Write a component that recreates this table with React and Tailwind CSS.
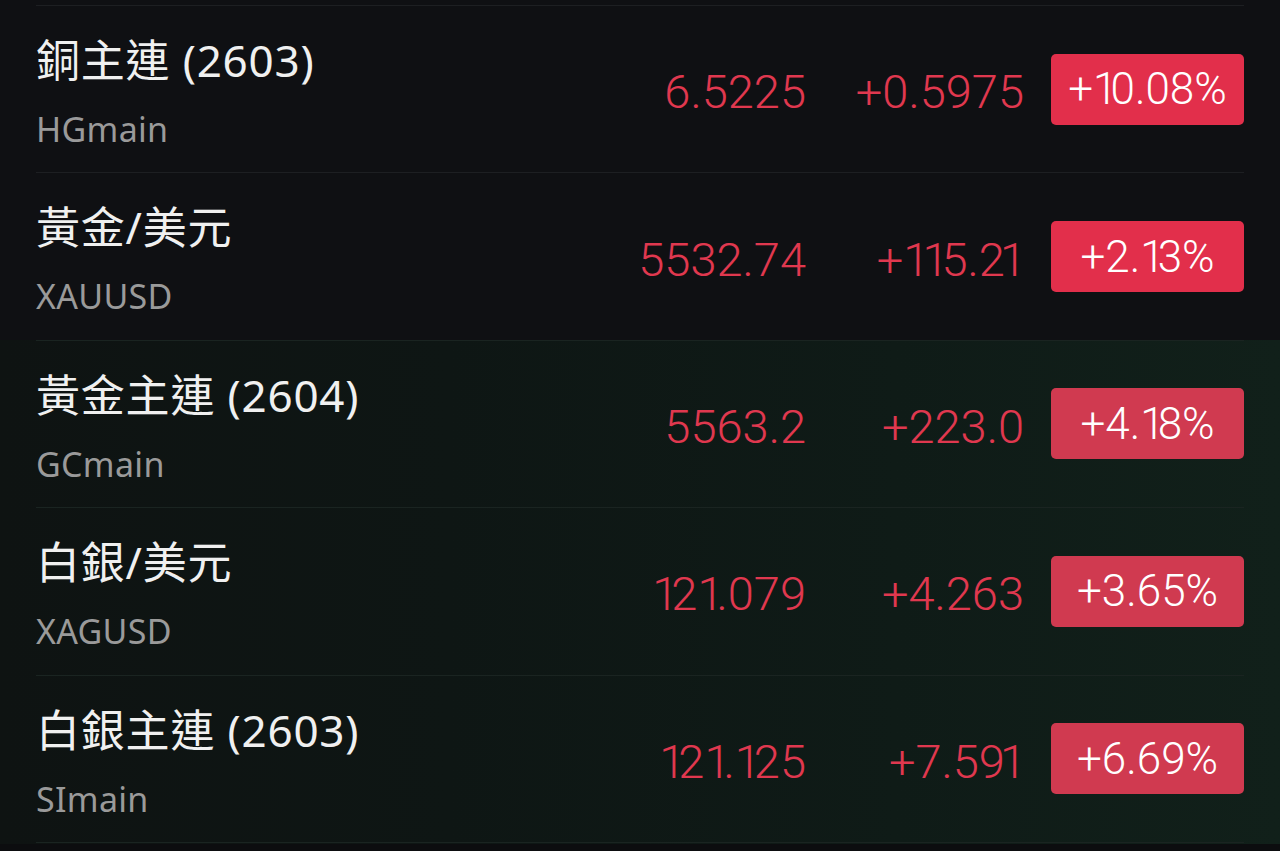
import React from 'react';

const rows = [
  { name: '銅主連 (2603)', code: 'HGmain', price: '6.5225', change: '+0.5975', pct: '+10.08%' },
  { name: '黃金/美元', code: 'XAUUSD', price: '5532.74', change: '+115.21', pct: '+2.13%' },
  { name: '黃金主連 (2604)', code: 'GCmain', price: '5563.2', change: '+223.0', pct: '+4.18%', tint: true },
  { name: '白銀/美元', code: 'XAGUSD', price: '121.079', change: '+4.263', pct: '+3.65%', tint: true },
  { name: '白銀主連 (2603)', code: 'SImain', price: '121.125', change: '+7.591', pct: '+6.69%', tint: true },
];

const numFont = { fontFamily: 'Roboto, "Liberation Sans", sans-serif' };
const nameFont = { fontFamily: '"Noto Sans", "Noto Sans CJK TC", sans-serif' };

// the app's number font has a narrow "1": tighten the space round it
function Num({ text }) {
  const chars = text.split('');
  const n = chars.length;
  return (
    <>
      {chars.map((c, i) => {
        let cls = '';
        if (c === '1' && i < n - 1) cls = 'tracking-[-7px]';
        else if (c === '1') cls = 'tracking-[-2px]';
        else if (i === n - 2 && chars[n - 1] === '1') cls = 'tracking-[-5px]';
        return (
          <span key={i} className={cls}>
            {c}
          </span>
        );
      })}
    </>
  );
}

function Row({ r }) {
  return (
    <div className={`h-[167.4px] border-t mx-[36px] flex ${r.tint ? 'border-[#1a2421]' : 'border-[#1d1f22]'}`}>
      <div style={nameFont} className="flex-1 flex flex-col pt-[28px]">
        <div className="text-[44px] leading-[52px] tracking-[0.8px] text-[#f0f0f0]">{r.name}</div>
        <div className="text-[34px] leading-[44px] tracking-[0.3px] text-[#9a9a9a] mt-[21px]">{r.code}</div>
      </div>
      <div style={numFont} className="flex items-center pt-[5px]">
        <div className="w-[220px] text-right text-[47px] leading-none text-[#e0384f] font-light">
          <Num text={r.price} />
        </div>
        <div className="w-[218px] text-right text-[47px] leading-none text-[#e0384f] font-light">
          <Num text={r.change} />
        </div>
      </div>
      <div className="flex items-center">
        <div
          style={numFont}
          className={`ml-[27px] w-[193px] h-[71px] rounded-[5px] flex items-center justify-center text-[44px] text-white font-light ${
            r.tint ? 'bg-[#d03a50]' : 'bg-[#e22f4b]'
          }`}
        >
          <Num text={r.pct} />
        </div>
      </div>
    </div>
  );
}

export default function App() {
  return (
    <div className="w-[1280px] h-[851px] bg-[#0f1013] overflow-hidden">
      <div className="h-[5px]" />
      <Row r={rows[0]} />
      <Row r={rows[1]} />
      <div className="bg-[linear-gradient(to_right,#0e1312,#0e1614_35%,#0f1b17_70%,#11201a)]">
        <Row r={rows[2]} />
        <Row r={rows[3]} />
        <Row r={rows[4]} />
        <div className="border-t border-[#1a2421] mx-[36px] h-[2px]" />
      </div>
      <div className="h-[10px] bg-[#0c0d0f]" />
    </div>
  );
}
